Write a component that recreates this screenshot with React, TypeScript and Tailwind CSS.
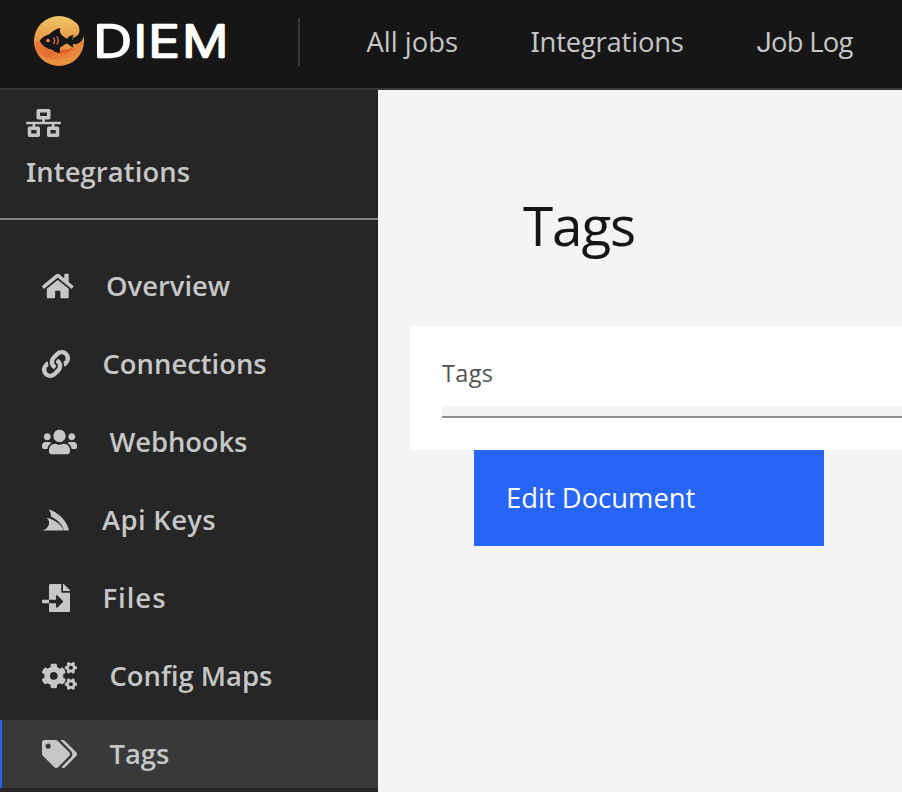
import type { ComponentType, ReactNode } from "react";
import {
  FaCogs,
  FaFileImport,
  FaLink,
  FaNetworkWired,
  FaServicestack,
  FaTags,
  FaUsers,
} from "react-icons/fa";

type Item = {
  label: string;
  icon: ComponentType<{ className?: string }>;
  iconClass: string;
  textClass: string;
  active?: boolean;
};

function HomeIcon({ className }: { className?: string }) {
  return (
    <svg className={className} viewBox="0 0 576 512" fill="currentColor">
      <path d="M488 312.7V456c0 13.3-10.7 24-24 24H348c-6.6 0-12-5.4-12-12V356c0-6.6-5.4-12-12-12h-72c-6.6 0-12 5.4-12 12v112c0 6.6-5.4 12-12 12H112c-13.3 0-24-10.7-24-24V312.7c0-3.6 1.6-7 4.4-9.3l188-154.8c4.4-3.6 10.8-3.6 15.3 0l188 154.8c2.7 2.3 4.3 5.7 4.3 9.3zm83.6-60.9L488 182.900V44.400c0-6.600-5.400-12-12-12h-56c-6.600 0-12 5.400-12 12V117l-89.500-73.700c-17.700-14.600-43.300-14.600-61 0L4.400 251.800c-5.100 4.200-5.800 11.800-1.600 16.900l25.500 31c4.200 5.100 11.800 5.800 16.900 1.600l235.200-193.700c4.400-3.600 10.800-3.600 15.300 0l235.200 193.700c5.100 4.200 12.700 3.500 16.900-1.600l25.500-31c4.200-5.200 3.400-12.700-1.700-16.900z" />
    </svg>
  );
}

const items: Item[] = [
  { label: "Overview", icon: HomeIcon, iconClass: "w-[31.5px]", textClass: "pl-[0.5px]" },
  { label: "Connections", icon: FaLink, iconClass: "w-7", textClass: "pl-[0.5px]" },
  { label: "Webhooks", icon: FaUsers, iconClass: "w-[35px]", textClass: "tracking-[-0.1px] pl-[0.5px]" },
  { label: "Api Keys", icon: FaServicestack, iconClass: "w-[27px]", textClass: "tracking-[0.36px] pl-[1px]" },
  { label: "Files", icon: FaFileImport, iconClass: "w-7", textClass: "tracking-[1px] pl-[0.5px]" },
  { label: "Config Maps", icon: FaCogs, iconClass: "w-[35px]", textClass: "pl-[0.5px]" },
  { label: "Tags", icon: FaTags, iconClass: "w-[35px]", textClass: "pl-[0.5px]", active: true },
];

function SerifI() {
  return <span className="font-['Noto_Sans',sans-serif]">I</span>;
}

function Logo() {
  return (
    <svg className="block h-[54px] w-[200px]" viewBox="32 14 200 54">
      <defs>
        <linearGradient id="sun" x1="0" y1="0" x2="0" y2="1">
          <stop offset="0" stopColor="#f0c766" />
          <stop offset="0.45" stopColor="#e99a48" />
          <stop offset="1" stopColor="#e98a3c" />
        </linearGradient>
        <linearGradient id="wave" x1="0" y1="0" x2="1" y2="0.4">
          <stop offset="0" stopColor="#ea7434" />
          <stop offset="0.5" stopColor="#e4602c" />
          <stop offset="1" stopColor="#e98a3c" />
        </linearGradient>
        <clipPath id="disc">
          <circle cx="177" cy="123" r="75" />
        </clipPath>
      </defs>
      <g transform="scale(0.33333)">
        <circle cx="177" cy="123" r="75" fill="url(#sun)" />
        <g clipPath="url(#disc)">
          <path d="M100 128C112 118 126 122 140 140C160 162 205 168 250 120L240 165C215 192 190 184 165 184C130 180 105 160 100 128Z" fill="url(#wave)" opacity="0.75" />
          <path d="M103 146C130 176 175 188 226 166C205 204 140 210 103 146Z" fill="#eb9440" opacity="0.7" />
          <path d="M180 150C196 150 208 148 220 141C212 156 196 162 180 158Z" fill="#df5528" opacity="0.8" />
        </g>
        <path d="M219 113C232 110 241 99 238 86C237 72 228 64 219 58L262 44L262 107L250 107C248 122 239 133 221 133Z" fill="#161616" />
        <path d="M119 122C126 112 137 106 149 102C157 93 168 86 181 84C179 92 180 98 184 104C190 109 196 114 201 116C206 110 213 105 221 104C217 111 217 115 218 119C230 119 242 116 250 107C248 120 238 131 219 131C218 135 219 139 222 143C213 141 206 135 201 130C194 134 186 139 180 143C179 149 179 154 180 159C170 158 162 154 156 149C141 146 127 138 119 122Z" fill="#161616" />
        <circle cx="144" cy="121.5" r="5.5" fill="#e9843d" />
        <path d="M160 112Q168 122 160 132M170 109Q180 122 170 134" fill="none" stroke="#dd6a35" strokeWidth="4" />
      </g>
      <g
        className="font-['Inter',sans-serif] text-[43.3px] font-light"
        fill="#fff"
        stroke="#fff"
        strokeWidth="2.3"
        strokeLinejoin="round"
      >
        <text transform="translate(93.2 56.8) scale(1.24 1)">D</text>
        <text transform="translate(133.5 56.8) scale(1.2 1)">I</text>
        <text transform="translate(148.2 56.8) scale(1.22 1)">E</text>
        <text transform="translate(182.2 56.8) scale(1.18 1)">M</text>
      </g>
    </svg>
  );
}

function NavLink({ children, className }: { children: ReactNode; className: string }) {
  return <a className={`block whitespace-nowrap text-[27.4px] leading-[83px] text-[#c6c6c6] ${className}`}>{children}</a>;
}

export default function App() {
  return (
    <div className="flex h-[792px] w-[902px] flex-col overflow-hidden bg-[#f4f4f4] font-['Open_Sans',sans-serif]">
      <header className="flex h-[90px] shrink-0 border-b-2 border-[#393939] bg-[#161616]">
        <div className="w-[298px] shrink-0 pl-8 pt-3.5">
          <Logo />
        </div>
        <div className="mt-[18px] h-12 w-0.5 shrink-0 bg-[#393939]" />
        <nav className="flex">
          <NavLink className="ml-[66.5px] w-[164px]">All jobs</NavLink>
          <NavLink className="w-[226px] tracking-[-0.2px]"><SerifI />ntegrations</NavLink>
          <NavLink className="tracking-[-0.7px]"><span className="font-['Roboto',sans-serif]">J</span>ob Log</NavLink>
        </nav>
      </header>

      <div className="flex min-h-0 flex-1">
        <aside className="w-[378px] shrink-0 bg-[#262626] text-[27.4px] font-semibold text-[#c6c6c6]">
          <div className="h-[130px] border-b-2 border-[#808080] pl-[26px] pt-[19px]">
            <FaNetworkWired className="block h-7 w-[35px]" />
            <div className="mt-4 leading-[38px] tracking-[0.1px]"><SerifI />ntegrations</div>
          </div>
          <ul className="flex flex-col gap-2.5 pt-8">
            {items.map(({ label, icon: Icon, iconClass, textClass, active }) => (
              <li
                key={label}
                className={`flex h-[68px] items-center gap-8 border-l-2 pl-10 ${active ? "border-[#2665f7] bg-[#393939]" : "border-transparent"}`}
              >
                <Icon className={`mb-px block h-7 shrink-0 ${iconClass}`} />
                <span className={`block leading-[68px] ${textClass}`}>{label}</span>
              </li>
            ))}
          </ul>
        </aside>

        <main className="min-w-0 flex-1 pl-8">
          <h1 className="pl-[113px] pt-[95px] text-[54.8px] leading-[80px] tracking-[-1.1px] text-[#161616]">Tags</h1>
          <section className="mt-[61px] h-[124px] bg-white pl-8 pt-[31px]">
            <div className="h-[49px] text-[23.4px] leading-8 tracking-[0.4px] text-[#525252]">Tags</div>
            <div className="h-3 border-b-2 border-[#8d8d8d] bg-[#f4f4f4]" />
          </section>
          <button className="ml-16 block h-24 w-[350px] bg-[#2665f7] pl-8 text-left text-[27.4px] text-white">
            Edit Document
          </button>
        </main>
      </div>
    </div>
  );
}
